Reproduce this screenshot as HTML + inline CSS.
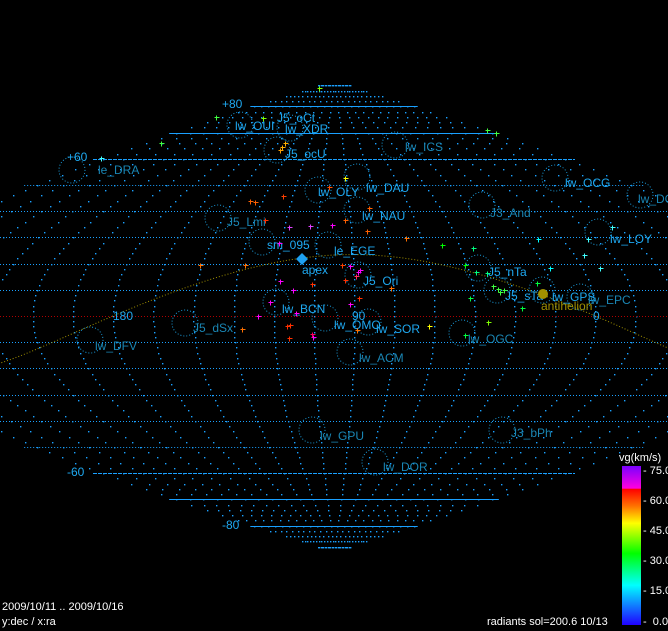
<!DOCTYPE html>
<html><head><meta charset="utf-8"><style>
html,body{margin:0;padding:0;background:#000;width:668px;height:631px;overflow:hidden}
svg{display:block}
text{font-family:"Liberation Sans",sans-serif;font-size:12px}
.l{fill:#1ea8f0}.d{fill:#1a86b4}.w{fill:#fff;font-size:11px}
</style></head><body>
<svg id="s" width="668" height="631" viewBox="0 0 668 631" xmlns="http://www.w3.org/2000/svg">
<defs><linearGradient id="cb" x1="0" y1="0" x2="0" y2="1">
<stop offset="0" stop-color="#7a00ff"/><stop offset="0.14" stop-color="#ff00e0"/>
<stop offset="0.145" stop-color="#ff0000"/><stop offset="0.25" stop-color="#ff7000"/>
<stop offset="0.36" stop-color="#ffff00"/><stop offset="0.55" stop-color="#00ff00"/>
<stop offset="0.75" stop-color="#00ffff"/><stop offset="1" stop-color="#2000ff"/></linearGradient></defs>
<g id="grid"></g>
<g id="lab">
<text class="l" x="222" y="108">+80</text><text class="l" x="67" y="161">+60</text>
<text class="l" x="67" y="476">-60</text><text class="l" x="222" y="529">-80</text>
<text class="l" x="113" y="320">180</text><text class="l" x="352" y="320">90</text><text class="l" x="593" y="320">0</text>
<text class="l" x="235" y="130">lw_OUI</text><text class="l" x="277" y="122">J5_oCt</text>
<text class="l" x="285" y="133">lw_XDR</text><text class="l" x="285" y="158">J5_ocU</text>
<text class="d" x="405" y="151">lw_ICS</text><text class="d" x="98" y="174">le_DRA</text>
<text class="l" x="318" y="196">lw_OLY</text><text class="l" x="366" y="192">lw_DAU</text>
<text class="l" x="362" y="220">lw_NAU</text><text class="d" x="227" y="226">J5_Lmi</text>
<text class="d" x="490" y="217">J3_And</text><text class="l" x="565" y="187">lw_OCG</text>
<text class="d" x="638" y="203">lw_DC</text><text class="l" x="610" y="243">lw_LOY</text>
<text class="l" x="267" y="249">sm_095</text><text class="l" x="334" y="255">le_EGE</text>
<text class="l" x="302" y="274">apex</text><text class="l" x="488" y="276">J5_nTa</text>
<text class="l" x="363" y="285">J5_Ori</text><text class="l" x="505" y="300">J5_sTa</text>
<text class="l" x="552" y="301">lw_GPS</text><text class="d" x="588" y="304">lw_EPC</text>
<text x="541" y="310" fill="#a09000">antihelion</text>
<text class="l" x="282" y="313">lw_BCN</text><text class="l" x="334" y="329">lw_OMO</text>
<text class="l" x="376" y="333">lw_SOR</text><text class="d" x="193" y="332">J5_dSx</text>
<text class="d" x="468" y="343">lw_OGC</text><text class="d" x="95" y="350">lw_DFV</text>
<text class="d" x="359" y="362">lw_ACM</text><text class="d" x="320" y="440">lw_GPU</text>
<text class="d" x="511" y="437">J3_bPh</text><text class="d" x="383" y="471">lw_DOR</text>
</g>
<polygon points="302,253 308,259 302,265 296,259" fill="#1ea0f0"/>
<circle cx="543" cy="294" r="5" fill="#a09000"/>
<rect x="622" y="466" width="19" height="159" fill="url(#cb)"/>
<g fill="#fff" font-size="11">
<text class="w" x="619" y="461">vg(km/s)</text>
<text class="w" x="643" y="474">- 75.0</text><text class="w" x="643" y="504">- 60.0</text>
<text class="w" x="643" y="534">- 45.0</text><text class="w" x="643" y="564">- 30.0</text>
<text class="w" x="643" y="594">- 15.0</text><text class="w" x="643" y="625">- &#160;0.0</text>
<text class="w" x="2" y="610">2009/10/11 .. 2009/10/16</text>
<text class="w" x="2" y="625">y:dec / x:ra</text>
<text class="w" x="487" y="625">radiants sol=200.6 10/13</text>
</g>
<g id="pts"></g>
</svg>
<script>
var NS="http://www.w3.org/2000/svg",g=document.getElementById("grid"),pg=document.getElementById("pts");
var cx=334,cy=316,k=2.68,v=2.62,ra0=97.5,R=Math.PI/180;
function P(ra,dec){var d=ra0-ra;while(d>180)d-=360;while(d<-180)d+=360;return[cx+d*k*Math.cos(dec*R),cy-dec*v];}
function el(p,t,a){var e=document.createElementNS(NS,t);for(var i in a)e.setAttribute(i,a[i]);p.appendChild(e);return e;}
var gc="#1aa0ff";
for(var ra=0;ra<360;ra+=15){for(var de=-88;de<=88;de+=2){var q=P(ra,de);if(q[0]<0||q[0]>668)continue;el(g,"rect",{x:Math.round(q[0]),y:Math.round(q[1]),width:1.4,height:1.4,fill:gc});}}
for(var de=-80;de<=80;de+=10){var y=Math.round(cy-de*v)+0.5;var hw=482*Math.cos(de*R);var x1=Math.max(0,cx-hw),x2=Math.min(668,cx+hw);
if(de==0){el(g,"line",{x1:0,y1:y,x2:668,y2:y,stroke:"#b00000","stroke-dasharray":"1 2"});continue;}
var a={x1:x1,y1:y,x2:x2,y2:y,stroke:gc,"stroke-width":1};
if(Math.abs(de)<=50)a["stroke-dasharray"]="1 2";else if(Math.abs(de)<=60)a["stroke-dasharray"]="4 1";
el(g,"line",a);}
var s="";for(var ra=-180;ra<=540;ra+=2){var d=Math.atan(Math.sin(ra*R)*Math.tan(23.44*R))/R;var dd=ra0-ra;if(dd>180||dd<-180)continue;var q=P(ra,d);s+=q[0].toFixed(1)+","+q[1].toFixed(1)+" ";}
el(g,"polyline",{points:s,fill:"none",stroke:"#a09000","stroke-dasharray":"1 2"});
var C=[[240,125],[290,128],[277,150],[395,145],[72,170],[318,190],[357,177],[357,210],[218,218],[482,205],[555,178],[640,195],[598,232],[262,242],[328,245],[478,268],[358,275],[497,290],[542,290],[580,297],[276,302],[325,318],[368,322],[185,323],[462,333],[90,340],[350,352],[312,430],[502,430],[375,462]];
C.forEach(function(c){el(g,"circle",{cx:c[0],cy:c[1],r:13,fill:"none",stroke:"#1a9ad8","stroke-dasharray":"1 2"});});
var M=[[319,88,"#80ff00"],[216,117,"#40ff40"],[263,118,"#80ff00"],[161,143,"#40ff40"],[285,143,"#ffb000"],[282,147,"#ffb000"],[280,150,"#ffa000"],[101,158,"#40ffff"],[329,187,"#ff5000"],[283,196,"#ff4000"],[250,201,"#ff6000"],[255,202,"#ff6000"],[265,220,"#ff3000"],[289,227,"#e040ff"],[310,226,"#e040ff"],[332,225,"#ff00ff"],[345,178,"#ffff00"],[369,208,"#ff6000"],[367,231,"#ff6000"],[345,220,"#ff6000"],[406,238,"#ff7000"],[279,243,"#ff00ff"],[200,265,"#ff7000"],[280,281,"#ff00ff"],[296,313,"#ff00ff"],[293,290,"#ff00ff"],[358,272,"#ff00ff"],[356,276,"#ff3060"],[360,270,"#ff00ff"],[350,266,"#ff00ff"],[342,265,"#ff4000"],[345,280,"#ff3000"],[359,298,"#ff3000"],[350,304,"#ff00ff"],[391,288,"#ff7000"],[313,337,"#ff00ff"],[312,284,"#ff3000"],[429,326,"#ffff00"],[473,248,"#00ff80"],[470,298,"#00ff40"],[493,286,"#40ff40"],[498,289,"#40ff40"],[500,292,"#40ff40"],[504,290,"#40ff40"],[487,273,"#00ff80"],[476,272,"#00ff80"],[465,265,"#00ff00"],[465,335,"#00ff40"],[488,322,"#80ff00"],[538,239,"#00ffff"],[588,239,"#40ffff"],[584,255,"#40ffff"],[550,268,"#00ffff"],[600,268,"#40ffff"],[612,227,"#40ffff"],[496,133,"#40ff40"],[487,130,"#40ff40"],[290,325,"#ff3000"],[287,326,"#ff3000"],[245,265,"#ff7000"],[242,329,"#ff7000"],[289,338,"#ff3000"],[270,302,"#ff00ff"],[258,316,"#ff00ff"],[312,334,"#ff0060"],[357,330,"#ff7000"],[522,308,"#00ff40"],[537,283,"#00ff40"],[442,245,"#00ff00"]];
M.forEach(function(m){el(pg,"path",{d:"M"+(m[0]-2)+" "+m[1]+"h5M"+m[0]+" "+(m[1]-2)+"v5",stroke:m[2],"stroke-width":1,fill:"none",transform:"translate(0.5,0.5)"});});
</script>
</body></html>
